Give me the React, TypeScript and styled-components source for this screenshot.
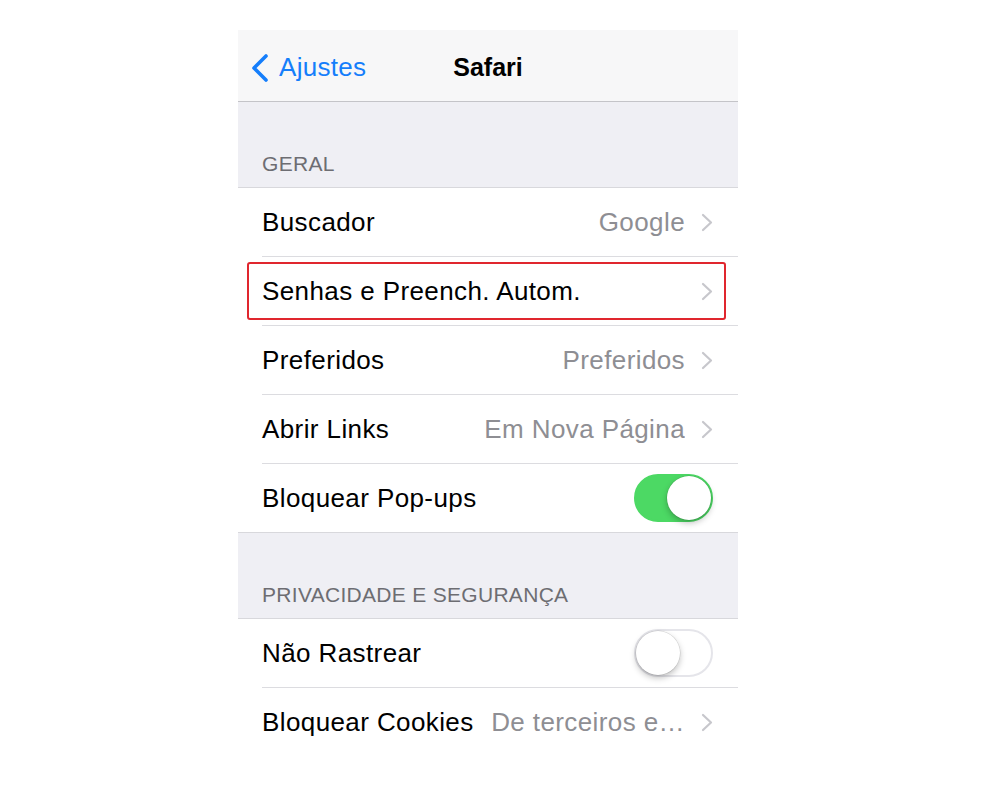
import styled, { createGlobalStyle } from "styled-components";

const GlobalStyle = createGlobalStyle`
  body {
    margin: 0;
    background: #ffffff;
    font-family: "Liberation Sans", Arial, sans-serif;
    -webkit-font-smoothing: antialiased;
  }
`;

const Screen = styled.div`
  width: 500px;
  margin: 30px 0 0 238px;
  background: #efeff4;
  display: flex;
  flex-direction: column;
`;

const NavBar = styled.div`
  height: 72px;
  padding-top: 4px;
  box-sizing: border-box;
  background: #f7f7f8;
  border-bottom: 1px solid #c4c4c8;
  display: grid;
  grid-template-columns: 1fr auto 1fr;
  align-items: center;
`;

const BackButton = styled.div`
  display: flex;
  align-items: center;
  gap: 9px;
  padding-left: 12px;
  color: #157efb;
  font-size: 26px;
  letter-spacing: 0.3px;
  svg {
    flex-shrink: 0;
  }
`;

const NavTitle = styled.div`
  font-size: 25px;
  font-weight: 700;
  color: #000;
`;

const SectionHeader = styled.div`
  height: 86px;
  display: flex;
  align-items: flex-end;
  padding: 0 0 11px 24px;
  box-sizing: border-box;
  font-size: 21px;
  letter-spacing: 0.3px;
  color: #6d6d72;
  border-bottom: 1px solid #d8d8dc;
`;

const Group = styled.div<{ $open?: boolean }>`
  background: #fff;
  border-bottom: 1px solid ${(p) => (p.$open ? "transparent" : "#d8d8dc")};
`;

const Row = styled.div<{ $highlight?: boolean }>`
  position: relative;
  padding-left: 24px;
  &:last-child > div {
    border-bottom: none;
  }
  ${(p) =>
    p.$highlight &&
    `
    &::after {
      content: "";
      position: absolute;
      left: 9px;
      right: 12px;
      top: 5px;
      bottom: 6px;
      border: 2px solid #e0262e;
      border-radius: 3px;
    }
  `}
`;

const RowInner = styled.div`
  height: 68px;
  display: flex;
  align-items: center;
  padding-right: 25px;
  border-bottom: 1px solid #dcdce0;
`;

const Label = styled.span`
  font-size: 26px;
  letter-spacing: 0.4px;
  color: #000;
  white-space: nowrap;
`;

const Value = styled.span`
  margin-left: auto;
  padding-left: 16px;
  font-size: 26px;
  letter-spacing: 0.4px;
  color: #8e8e93;
  white-space: nowrap;
  overflow: hidden;
`;

const Chevron = styled.svg`
  margin-left: 16px;
  flex-shrink: 0;
`;

const Switch = styled.div<{ $on: boolean }>`
  margin-left: auto;
  width: 79px;
  height: 48px;
  box-sizing: border-box;
  border-radius: 24px;
  display: flex;
  align-items: center;
  justify-content: ${(p) => (p.$on ? "flex-end" : "flex-start")};
  background: ${(p) => (p.$on ? "#4cd964" : "#fff")};
  border: 2px solid ${(p) => (p.$on ? "#4cd964" : "#e5e5ea")};
`;

const Knob = styled.div`
  width: 44px;
  height: 44px;
  border-radius: 50%;
  background: #fff;
  box-shadow: 0 3px 6px rgba(0, 0, 0, 0.25), 0 0 0 0.5px rgba(0, 0, 0, 0.14);
`;

const ChevronRight = () => (
  <Chevron width="12" height="19" viewBox="0 0 12 19">
    <polyline points="2,2 10,9.5 2,17" fill="none" stroke="#c7c7cc" strokeWidth="2.2" strokeLinecap="round" strokeLinejoin="round" />
  </Chevron>
);

interface ItemProps {
  label: string;
  value?: string;
  toggle?: boolean;
  on?: boolean;
  highlight?: boolean;
}

const Item = ({ label, value, toggle, on, highlight }: ItemProps) => (
  <Row $highlight={highlight}>
    <RowInner>
      <Label>{label}</Label>
      {toggle ? (
        <Switch $on={!!on}>
          <Knob />
        </Switch>
      ) : (
        <>
          <Value>{value}</Value>
          <ChevronRight />
        </>
      )}
    </RowInner>
  </Row>
);

const App = () => {
  return (
    <>
      <GlobalStyle />
      <Screen>
        <NavBar>
          <BackButton>
            <svg width="20" height="30" viewBox="0 0 20 30">
              <polyline points="16,3 4,15 16,27" fill="none" stroke="#157efb" strokeWidth="3.6" strokeLinecap="round" strokeLinejoin="round" />
            </svg>
            Ajustes
          </BackButton>
          <NavTitle>Safari</NavTitle>
          <div />
        </NavBar>

        <SectionHeader>GERAL</SectionHeader>
        <Group>
          <Item label="Buscador" value="Google" />
          <Item label="Senhas e Preench. Autom." highlight />
          <Item label="Preferidos" value="Preferidos" />
          <Item label="Abrir Links" value="Em Nova Página" />
          <Item label="Bloquear Pop-ups" toggle on />
        </Group>

        <SectionHeader>PRIVACIDADE E SEGURANÇA</SectionHeader>
        <Group $open>
          <Item label="Não Rastrear" toggle />
          <Item label="Bloquear Cookies" value="De terceiros e…" />
        </Group>
      </Screen>
    </>
  );
};

export default App;
